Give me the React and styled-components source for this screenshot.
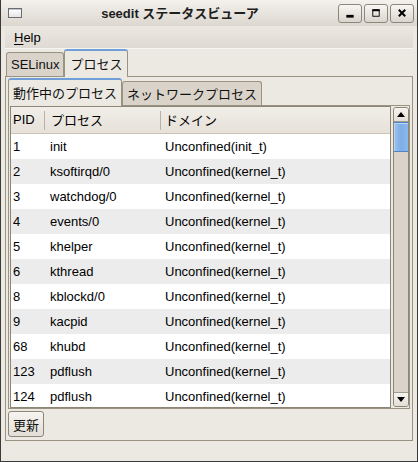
import React from 'react';
import styled, { createGlobalStyle, css } from 'styled-components';

const GlobalStyle = createGlobalStyle`
  html, body { margin: 0; padding: 0; background: #ece9e3; }
  body {
    font-family: "Liberation Sans", "Noto Sans CJK JP", sans-serif;
    font-size: 13px;
    color: #000;
  }
  * { box-sizing: border-box; }
`;

const Window = styled.div`
  width: 418px;
  height: 462px;
  background: #ece9e3;
  border: 1px solid #3a3a3a;
  border-top: none;
  display: flex;
  flex-direction: column;
  overflow: hidden;
`;

const TitleBar = styled.div`
  height: 26px;
  flex: none;
  display: flex;
  align-items: center;
  padding: 0 3px 0 7px;
  background: linear-gradient(#f3f1ed, #dcd7cf);
`;

const WinIcon = styled.div`
  width: 14px;
  height: 10px;
  border: 1px solid #6d6d6d;
  background: linear-gradient(#ffffff, #e4e4e8);
  box-shadow: inset 0 1px 0 #b9c6d8;
`;

const Title = styled.div`
  flex: 1;
  text-align: center;
  font-weight: bold;
  font-size: 13px;
  color: #1e1e1e;
  padding-bottom: 1px;
`;

const TitleButtons = styled.div`
  display: flex;
  gap: 2px;
`;

const TitleButton = styled.div`
  width: 24px;
  height: 19px;
  border: 1px solid #8c877d;
  border-radius: 3px;
  background: linear-gradient(#f8f6f3, #dad5cd);
  display: flex;
  align-items: center;
  justify-content: center;
`;

const MenuBar = styled.div`
  height: 23px;
  flex: none;
  margin: 0 4px;
  padding-left: 9px;
  display: flex;
  align-items: center;
  background: linear-gradient(#ebe8e2, #dfdad3);
  border-bottom: 1px solid #f7f5f1;
`;

const MenuItem = styled.span`
  u { text-decoration: underline; text-underline-offset: 2px; }
`;

const Body = styled.div`
  padding: 0 4px;
  flex: none;
`;

const TabRow = styled.div`
  display: flex;
  align-items: flex-end;
  padding-left: ${p => p.$indent || 0}px;
  margin-bottom: -1px;
  position: relative;
  z-index: 1;
`;

const Tab = styled.div`
  height: ${p => (p.$active ? 28 : 24)}px;
  margin-bottom: ${p => (p.$active ? 0 : 1)}px;
  padding: 0 ${p => p.$pad}px;
  display: flex;
  align-items: center;
  white-space: nowrap;
  border: 1px solid #9a9383;
  border-bottom: none;
  border-radius: 3px 3px 0 0;
  background: #d9d3c9;
  color: #111;
  ${p => p.$active && css`
    background: #ece9e3;
    border-top: 2px solid #6f9ed8;
    padding-bottom: 1px;
  `}
`;

const Panel = styled.div`
  border: 1px solid #9a9383;
  background: #ece9e3;
`;

const OuterPanel = styled(Panel)`
  padding: 1px 2px 3px 2px;
`;

const InnerPanel = styled(Panel)`
  height: 304px;
  display: flex;
  gap: 2px;
  padding-left: 1px;
`;

const Frame = styled.div`
  width: 382px;
  border: 1px solid #8d8677;
  background: #fff;
  display: flex;
  flex-direction: column;
  overflow: hidden;
`;

const cols = '33px 116px 1fr';

const Header = styled.div`
  display: grid;
  grid-template-columns: ${cols};
  height: 27px;
  flex: none;
  background: linear-gradient(#f1eee9, #e6e1d9);
  border-bottom: 1px solid #cbc4b7;
`;

const HeadCell = styled.div`
  position: relative;
  display: flex;
  align-items: center;
  padding-left: ${p => p.$pad}px;
  padding-bottom: 1px;
  ${p => p.$sep && css`
    &::before {
      content: '';
      position: absolute;
      left: 0;
      top: 4px;
      height: 19px;
      width: 1px;
      background: #b9b1a3;
    }
  `}
`;

const Rows = styled.div`
  flex: 1;
  overflow: hidden;
`;

const Row = styled.div`
  display: grid;
  grid-template-columns: ${cols};
  height: 25px;
  background: ${p => (p.$alt ? '#ececec' : '#ffffff')};
`;

const Cell = styled.div`
  display: flex;
  align-items: center;
  padding-left: ${p => p.$pad}px;
  white-space: nowrap;
`;

const Scrollbar = styled.div`
  width: 16px;
  margin-top: 1px;
  height: 300px;
  border: 1px solid #8d8677;
  border-radius: 3px;
  background: #d9d3c9;
  display: flex;
  flex-direction: column;
  overflow: hidden;
`;

const ArrowButton = styled.div`
  height: 14px;
  flex: none;
  background: linear-gradient(#f6f4f0, #e3ded6);
  border-${p => (p.$down ? 'top' : 'bottom')}: 1px solid #a49d8e;
  display: flex;
  align-items: center;
  justify-content: center;
`;

const Thumb = styled.div`
  height: 30px;
  flex: none;
  margin: 0 -1px;
  background: linear-gradient(90deg, #9cc2ee, #7eaee6 50%, #8ab8ec);
  border: 1px solid #4f84c4;
  box-shadow: inset 1px 1px 0 #b9d5f5;
`;

const Spacer = styled.div`
  flex: 1;
`;

const PushButton = styled.div`
  margin-top: 2px;
  width: 36px;
  height: 26px;
  border: 1px solid #8d8677;
  border-radius: 3px;
  background: linear-gradient(#f7f5f2, #e2ddd5);
  display: flex;
  align-items: center;
  justify-content: center;
  color: #111;
`;

const Arrow = ({ down }) => (
  <svg width="8" height="5" viewBox="0 0 8 5">
    {down ? <polygon points="0,0 8,0 4,5" fill="#000" /> : <polygon points="0,5 8,5 4,0" fill="#000" />}
  </svg>
);

const data = [
  ['1', 'init', 'Unconfined(init_t)'],
  ['2', 'ksoftirqd/0', 'Unconfined(kernel_t)'],
  ['3', 'watchdog/0', 'Unconfined(kernel_t)'],
  ['4', 'events/0', 'Unconfined(kernel_t)'],
  ['5', 'khelper', 'Unconfined(kernel_t)'],
  ['6', 'kthread', 'Unconfined(kernel_t)'],
  ['8', 'kblockd/0', 'Unconfined(kernel_t)'],
  ['9', 'kacpid', 'Unconfined(kernel_t)'],
  ['68', 'khubd', 'Unconfined(kernel_t)'],
  ['123', 'pdflush', 'Unconfined(kernel_t)'],
  ['124', 'pdflush', 'Unconfined(kernel_t)'],
];

export default function App() {
  return (
    <>
      <GlobalStyle />
      <Window>
        <TitleBar>
          <WinIcon />
          <Title>seedit ステータスビューア</Title>
          <TitleButtons>
            <TitleButton>
              <svg width="24" height="19" viewBox="0 0 24 19">
                <rect x="8" y="11" width="8" height="3" fill="#000" />
              </svg>
            </TitleButton>
            <TitleButton>
              <svg width="24" height="19" viewBox="0 0 24 19">
                <rect x="8.5" y="5.5" width="7" height="7" fill="none" stroke="#000" strokeWidth="1" />
                <rect x="8" y="5" width="8" height="2" fill="#000" />
              </svg>
            </TitleButton>
            <TitleButton>
              <svg width="24" height="19" viewBox="0 0 24 19">
                <path d="M8.5 5.5 L15.5 12.5 M15.5 5.5 L8.5 12.5" stroke="#000" strokeWidth="2.2" />
              </svg>
            </TitleButton>
          </TitleButtons>
        </TitleBar>
        <MenuBar>
          <MenuItem><u>H</u>elp</MenuItem>
        </MenuBar>
        <Body>
          <TabRow $indent={1}>
            <Tab $pad={4}>SELinux</Tab>
            <Tab $pad={5} $active>プロセス</Tab>
          </TabRow>
          <OuterPanel>
            <TabRow>
              <Tab $pad={4} $active>動作中のプロセス</Tab>
              <Tab $pad={4}>ネットワークプロセス</Tab>
            </TabRow>
            <InnerPanel>
              <Frame>
                <Header>
                  <HeadCell $pad={2}>PID</HeadCell>
                  <HeadCell $pad={7} $sep>プロセス</HeadCell>
                  <HeadCell $pad={5} $sep>ドメイン</HeadCell>
                </Header>
                <Rows>
                  {data.map((r, i) => (
                    <Row key={i} $alt={i % 2 === 1}>
                      <Cell $pad={2}>{r[0]}</Cell>
                      <Cell $pad={6}>{r[1]}</Cell>
                      <Cell $pad={5}>{r[2]}</Cell>
                    </Row>
                  ))}
                </Rows>
              </Frame>
              <Scrollbar>
                <ArrowButton><Arrow /></ArrowButton>
                <Thumb />
                <Spacer />
                <ArrowButton $down><Arrow down /></ArrowButton>
              </Scrollbar>
            </InnerPanel>
            <PushButton>更新</PushButton>
          </OuterPanel>
        </Body>
      </Window>
    </>
  );
}
